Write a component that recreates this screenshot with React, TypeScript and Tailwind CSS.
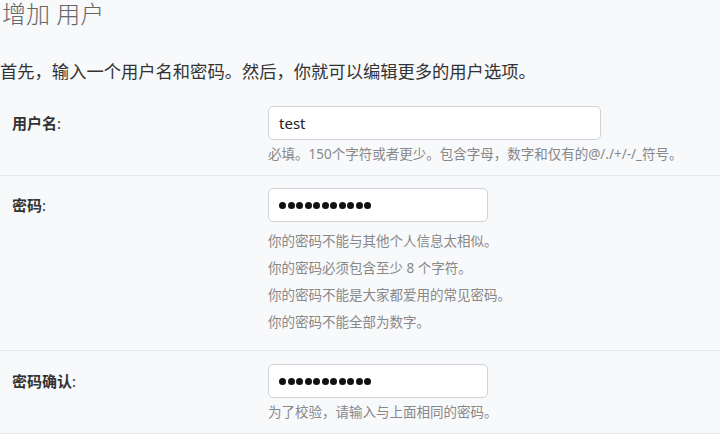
import { ReactNode } from "react";

const font = { fontFamily: '"Noto Sans", "Noto Sans CJK SC", sans-serif' };

type RowProps = {
  label: string;
  children: ReactNode;
  padding: string;
};

// one form row: bold label on the left, field and help text on the right
const FormRow = ({ label, children, padding }: RowProps) => (
  <div className={`${padding} flex border-b border-[#e6e8ec]`}>
    <div className="w-[268px] shrink-0 pl-3 text-[15px] font-bold leading-[34px] text-[#333]">
      {label}
      <span className="font-normal">:</span>
    </div>
    <div>{children}</div>
  </div>
);

const TextBox = ({ value }: { value: string }) => (
  <div className="flex h-[34px] w-[333px] items-center rounded-[5px] border border-[#cfd2d6] bg-white px-[10px] text-[15px] text-[#222]">
    {value}
  </div>
);

const Dots = ({ count }: { count: number }) => (
  <div className="flex h-[34px] w-[220px] items-center gap-[1.5px] rounded-[5px] border border-[#cfd2d6] bg-white px-[10px]">
    {Array.from({ length: count }).map((_, i) => (
      <span key={i} className="h-[7px] w-[7px] rounded-full bg-[#111]" />
    ))}
  </div>
);

const Help = ({ children }: { children: ReactNode }) => (
  <div className="mt-[4px] text-[13.5px] leading-[20px] text-[#888]">{children}</div>
);

export default function App() {
  const pwHelp = [
    "你的密码不能与其他个人信息太相似。",
    "你的密码必须包含至少 8 个字符。",
    "你的密码不能是大家都爱用的常见密码。",
    "你的密码不能全部为数字。",
  ];

  return (
    <div className="h-[434px] w-[720px] overflow-hidden bg-[#f8f9fb]" style={font}>
      <h1 className="mb-[34px] pl-[2px] pt-[2px] text-[24px] font-light leading-[24px] text-[#666]">
        增加 用户
      </h1>
      <p className="mb-[9px] text-[17.3px] leading-[24px] text-[#333]">
        首先，输入一个用户名和密码。然后，你就可以编辑更多的用户选项。
      </p>

      <FormRow label="用户名" padding="pt-[13px] pb-[11px]">
        <TextBox value="test" />
        <Help>必填。150个字符或者更少。包含字母，数字和仅有的@/./+/-/_符号。</Help>
      </FormRow>

      <FormRow label="密码" padding="pt-[12px] pb-[14px]">
        <Dots count={11} />
        <div className="mt-[6px] text-[13.5px] leading-[27px] text-[#888]">
          {pwHelp.map((line) => (
            <div key={line}>{line}</div>
          ))}
        </div>
      </FormRow>

      <FormRow label="密码确认" padding="pt-[13px] pb-[11px]">
        <Dots count={11} />
        <Help>为了校验，请输入与上面相同的密码。</Help>
      </FormRow>
    </div>
  );
}
